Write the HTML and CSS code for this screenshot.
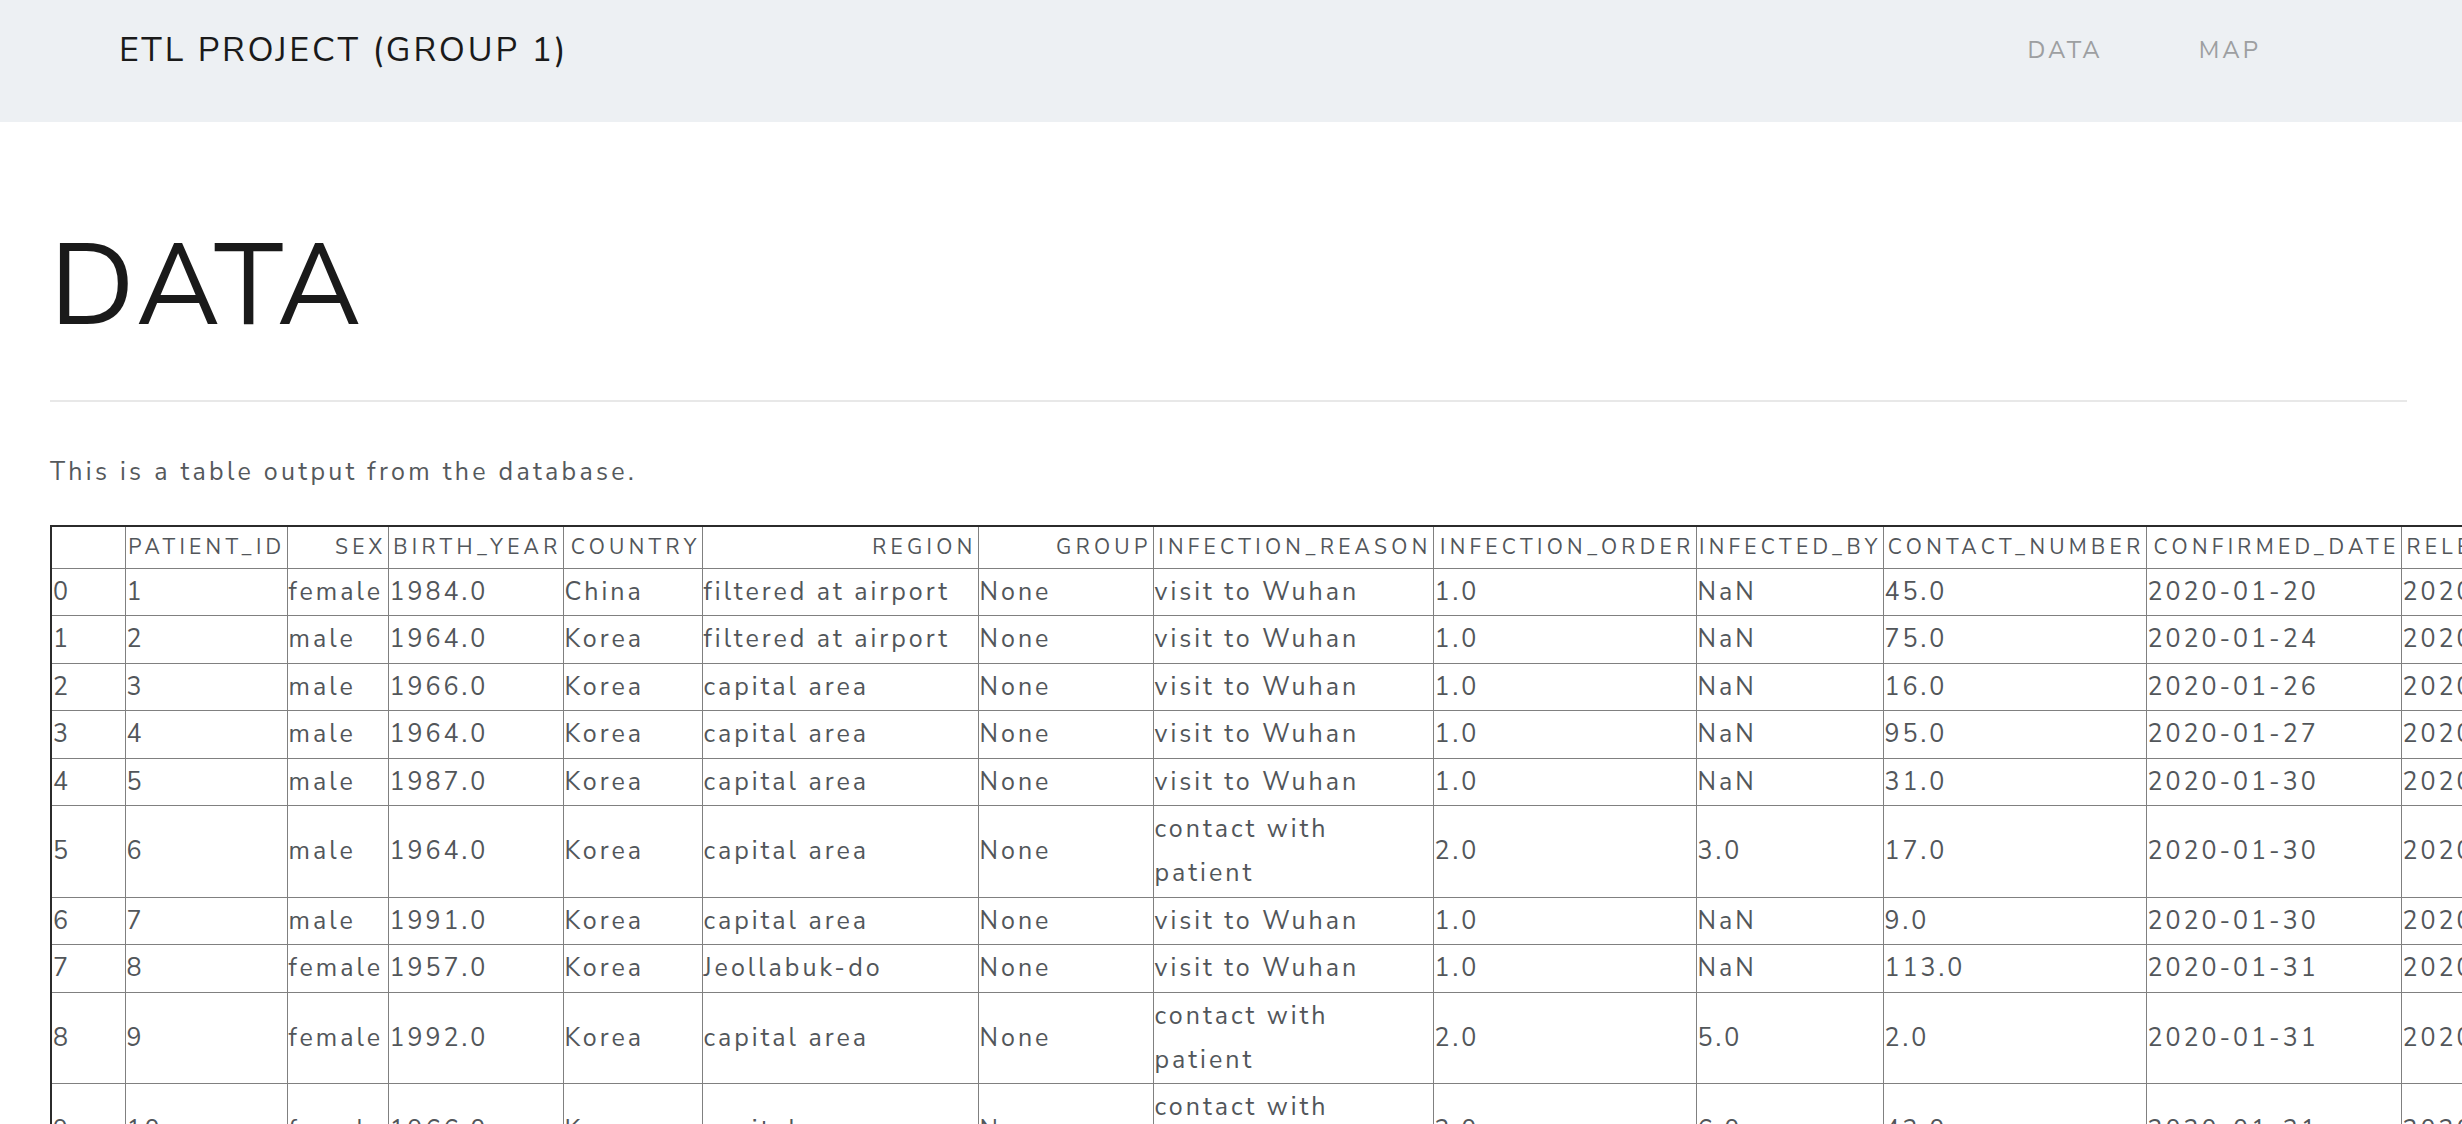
FILE: index.html
```html
<!DOCTYPE html>
<html lang="en">
<head>
<meta charset="utf-8">
<title>ETL Project (Group 1) - Data</title>
<link rel="stylesheet" href="styles.css">
</head>
<body>
<div class="page">
  <nav class="navbar">
    <a class="brand" href="#">ETL PROJECT (GROUP 1)</a>
    <ul class="nav">
      <li><a class="nav-link" href="#">Data</a></li>
      <li><a class="nav-link" href="#">Map</a></li>
    </ul>
  </nav>
  <main class="content">
    <h1 class="title">DATA</h1>
    <hr class="rule">
    <p class="intro">This is a table output from the database.</p>
    <table class="data">
      <colgroup>
        <col class="c-idx"><col class="c-pid"><col class="c-sex"><col class="c-year"><col class="c-country"><col class="c-region"><col class="c-group"><col class="c-reason"><col class="c-order"><col class="c-by"><col class="c-contact"><col class="c-date"><col class="c-released"><col class="c-released"><col class="c-state">
      </colgroup>
      <thead>
        <tr>
          <th></th><th>patient_id</th><th>sex</th><th>birth_year</th><th>country</th><th>region</th><th>group</th><th>infection_reason</th><th>infection_order</th><th>infected_by</th><th>contact_number</th><th>confirmed_date</th><th>released_date</th><th>deceased_date</th><th>state</th>
        </tr>
      </thead>
      <tbody>
        <tr><th>0</th><td>1</td><td>female</td><td>1984.0</td><td>China</td><td>filtered at airport</td><td>None</td><td>visit to Wuhan</td><td>1.0</td><td>NaN</td><td>45.0</td><td>2020-01-20</td><td>2020-02-06</td><td>None</td><td>released</td></tr>
        <tr><th>1</th><td>2</td><td>male</td><td>1964.0</td><td>Korea</td><td>filtered at airport</td><td>None</td><td>visit to Wuhan</td><td>1.0</td><td>NaN</td><td>75.0</td><td>2020-01-24</td><td>2020-02-05</td><td>None</td><td>released</td></tr>
        <tr><th>2</th><td>3</td><td>male</td><td>1966.0</td><td>Korea</td><td>capital area</td><td>None</td><td>visit to Wuhan</td><td>1.0</td><td>NaN</td><td>16.0</td><td>2020-01-26</td><td>2020-02-12</td><td>None</td><td>released</td></tr>
        <tr><th>3</th><td>4</td><td>male</td><td>1964.0</td><td>Korea</td><td>capital area</td><td>None</td><td>visit to Wuhan</td><td>1.0</td><td>NaN</td><td>95.0</td><td>2020-01-27</td><td>2020-02-09</td><td>None</td><td>released</td></tr>
        <tr><th>4</th><td>5</td><td>male</td><td>1987.0</td><td>Korea</td><td>capital area</td><td>None</td><td>visit to Wuhan</td><td>1.0</td><td>NaN</td><td>31.0</td><td>2020-01-30</td><td>2020-03-02</td><td>None</td><td>released</td></tr>
        <tr><th>5</th><td>6</td><td>male</td><td>1964.0</td><td>Korea</td><td>capital area</td><td>None</td><td>contact with patient</td><td>2.0</td><td>3.0</td><td>17.0</td><td>2020-01-30</td><td>2020-02-19</td><td>None</td><td>released</td></tr>
        <tr><th>6</th><td>7</td><td>male</td><td>1991.0</td><td>Korea</td><td>capital area</td><td>None</td><td>visit to Wuhan</td><td>1.0</td><td>NaN</td><td>9.0</td><td>2020-01-30</td><td>2020-02-15</td><td>None</td><td>released</td></tr>
        <tr><th>7</th><td>8</td><td>female</td><td>1957.0</td><td>Korea</td><td>Jeollabuk-do</td><td>None</td><td>visit to Wuhan</td><td>1.0</td><td>NaN</td><td>113.0</td><td>2020-01-31</td><td>2020-02-12</td><td>None</td><td>released</td></tr>
        <tr><th>8</th><td>9</td><td>female</td><td>1992.0</td><td>Korea</td><td>capital area</td><td>None</td><td>contact with patient</td><td>2.0</td><td>5.0</td><td>2.0</td><td>2020-01-31</td><td>2020-02-24</td><td>None</td><td>released</td></tr>
        <tr><th>9</th><td>10</td><td>female</td><td>1966.0</td><td>Korea</td><td>capital area</td><td>None</td><td>contact with patient</td><td>3.0</td><td>6.0</td><td>43.0</td><td>2020-01-31</td><td>2020-02-19</td><td>None</td><td>released</td></tr>
        <tr><th>10</th><td>11</td><td>male</td><td>1995.0</td><td>Korea</td><td>capital area</td><td>None</td><td>contact with patient</td><td>3.0</td><td>6.0</td><td>0.0</td><td>2020-01-31</td><td>2020-02-10</td><td>None</td><td>released</td></tr>
      </tbody>
    </table>
  </main>
</div>
</body>
</html>
```
FILE: styles.css
```css
* {
  box-sizing: border-box;
}

html,
body {
  margin: 0;
  padding: 0;
}

body {
  font-family: "Nunito Sans", Lato, "Open Sans", sans-serif;
  color: #55595c;
  background: #ffffff;
}

.page {
  overflow: hidden;
  min-height: 100vh;
}

/* ---------- navbar ---------- */
.navbar {
  display: flex;
  justify-content: space-between;
  align-items: flex-start;
  height: 122px;
  padding: 0 201px 0 119px;
  background: #edf0f3;
}

.brand {
  padding-top: 30px;
  font-size: 34px;
  line-height: 41px;
  letter-spacing: 2.9px;
  color: #1a1a1a;
  text-decoration: none;
}

.nav {
  display: flex;
  gap: 96px;
  list-style: none;
  margin: 0;
  padding: 36px 0 0;
}

.nav-link {
  font-size: 24px;
  line-height: 29px;
  letter-spacing: 3px;
  text-transform: uppercase;
  color: #9d9fa1;
  text-decoration: none;
}

/* ---------- content ---------- */
.content {
  padding: 0 55px 0 50px;
}

.title {
  margin: 96px 0 0;
  font-size: 114px;
  line-height: 137px;
  font-weight: 400;
  letter-spacing: 3.3px;
  color: #1a1a1a;
}

.rule {
  margin: 45px 0 0;
  border: 0;
  border-top: 2px solid #e8e8e8;
}

.intro {
  margin: 55px 0 38px;
  font-size: 25px;
  line-height: 30px;
  letter-spacing: 3.3px;
}

/* ---------- table ---------- */
.data {
  border-collapse: collapse;
  table-layout: fixed;
  width: 2938px;
  border-top: 2px solid #2b2b2b;
  border-left: 2px solid #2b2b2b;
}

.data th,
.data td {
  padding: 1px;
  border: 1px solid #808080;
  font-weight: 400;
  vertical-align: middle;
  color: #52565a;
}

.data td,
.data tbody th {
  font-size: 25px;
  line-height: 44.4px;
  letter-spacing: 3px;
  text-align: left;
}

.data thead th {
  font-size: 21px;
  line-height: 39px;
  letter-spacing: 4.3px;
  text-align: right;
  text-transform: uppercase;
  white-space: nowrap;
}

.c-idx { width: 74px; }
.c-pid { width: 162px; }
.c-sex { width: 101px; }
.c-year { width: 175px; }
.c-country { width: 139px; }
.c-region { width: 276px; }
.c-group { width: 175px; }
.c-reason { width: 280px; }
.c-order { width: 263px; }
.c-by { width: 187px; }
.c-contact { width: 263px; }
.c-date { width: 255px; }
.c-released { width: 232px; }
.c-state { width: 124px; }
```
